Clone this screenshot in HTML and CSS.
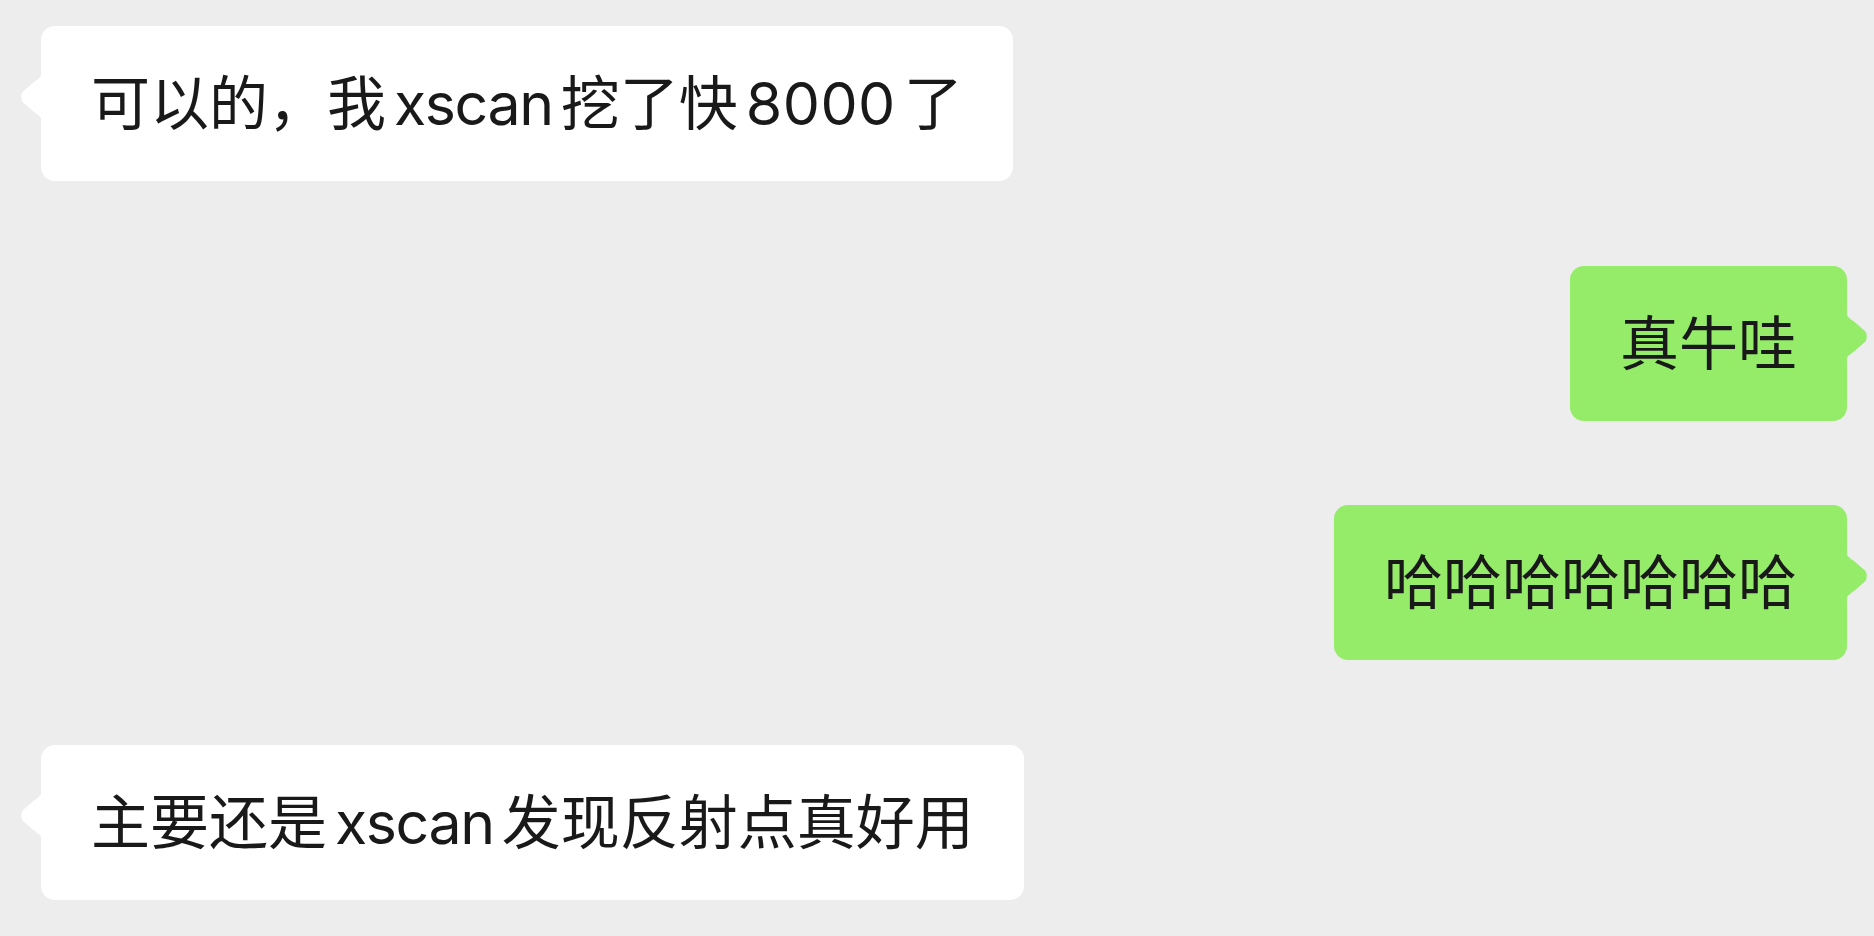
FILE: index.html
```html
<!DOCTYPE html>
<html lang="zh-CN">
<head>
<meta charset="utf-8">
<title>聊天</title>
<link rel="stylesheet" href="styles.css">
</head>
<body>
<main class="chat">
  <div class="row row-left">
    <div class="bubble bubble-in">可以的，我<span class="lat word">xscan</span>挖了快<span class="lat num">8000</span>了</div>
  </div>
  <div class="row row-right">
    <div class="bubble bubble-out">真牛哇</div>
  </div>
  <div class="row row-right">
    <div class="bubble bubble-out">哈哈哈哈哈哈哈</div>
  </div>
  <div class="row row-left">
    <div class="bubble bubble-in">主要还是<span class="lat word">xscan</span>发现反射点真好用</div>
  </div>
</main>
</body>
</html>
```

FILE: styles.css
```css
html, body {
  margin: 0;
  padding: 0;
  background: #ededed;
}

body {
  width: 1874px;
  height: 936px;
  overflow: hidden;
  font-family: "Inter", "Noto Sans CJK SC", sans-serif;
  color: #191919;
}

.chat {
  display: flex;
  flex-direction: column;
  gap: 84.5px;
  padding-top: 26px;
}

.row {
  display: flex;
}

.row-left {
  justify-content: flex-start;
  padding-left: 41px;
}

.row-right {
  justify-content: flex-end;
  padding-right: 27px;
}

.bubble {
  position: relative;
  box-sizing: border-box;
  height: 155px;
  padding: 36px 50px;
  font-size: 59px;
  line-height: 83px;
  border-radius: 14px;
  white-space: nowrap;
}

.bubble::before {
  content: "";
  position: absolute;
  top: 46px;
  width: 22px;
  height: 50px;
  background: inherit;
}

.bubble-in {
  background: #ffffff;
}

.bubble-in::before {
  left: -21px;
  clip-path: path("M22 0 C22 5 18 7 14 10 L2.5 20 Q0 25 2.5 30 L14 40 C18 43 22 45 22 50 Z");
}

.bubble-out {
  background: #95ec69;
}

.bubble-out::before {
  right: -21px;
  clip-path: path("M0 0 C0 5 4 7 8 10 L19.5 20 Q22 25 19.5 30 L8 40 C4 43 0 45 0 50 Z");
}

.lat {
  margin: 0 8px;
}

.word {
  letter-spacing: -1.4px;
}

.num {
  letter-spacing: 0.5px;
}
```
